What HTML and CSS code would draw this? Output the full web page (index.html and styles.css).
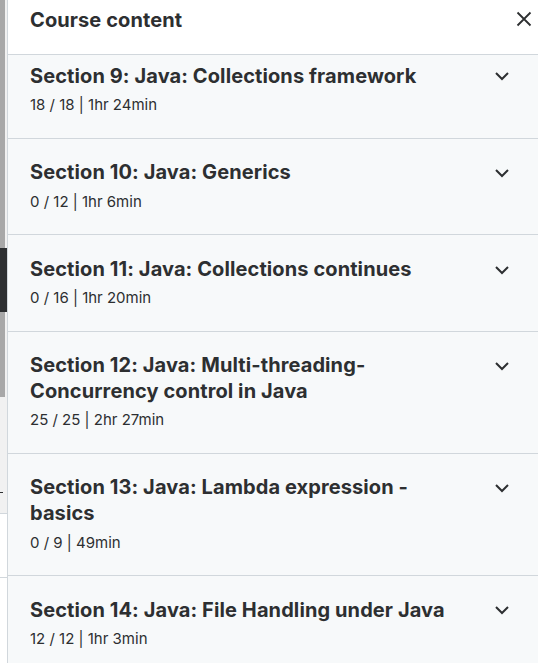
FILE: index.html
```html
<!DOCTYPE html>
<html lang="en">
<head>
<meta charset="utf-8">
<title>Course content</title>
<link rel="stylesheet" href="styles.css">
</head>
<body>
<div class="page">
  <div class="side">
    <div class="track">
      <div class="thumb t1"></div>
      <div class="dark"></div>
      <div class="thumb t2"></div>
      <div class="rest"><span class="dot"></span></div>
    </div>
    <div class="white w1"></div>
    <div class="white w2"></div>
  </div>
  <div class="panel">
    <div class="header">
      <h2 class="htitle">Course content</h2>
      <button class="close" aria-label="Close">
        <svg width="16" height="16" viewBox="0 0 16 16"><path d="M1.5 1.5 L14.5 14.5 M14.5 1.5 L1.5 14.5" stroke="#2d2f31" stroke-width="1.8" fill="none"/></svg>
      </button>
    </div>
    <div class="list">
      <div class="section first">
        <div class="info">
          <h3 class="stitle">Section 9: Java: Collections framework</h3>
          <div class="meta">18 / 18 | 1hr 24min</div>
        </div>
        <svg class="chev" width="14" height="26" viewBox="0 0 14 26"><path d="M1 10 L7 16 L13 10" stroke="#2d2f31" stroke-width="2" fill="none"/></svg>
      </div>
      <div class="section">
        <div class="info">
          <h3 class="stitle">Section 10: Java: Generics</h3>
          <div class="meta">0 / 12 | 1hr 6min</div>
        </div>
        <svg class="chev" width="14" height="26" viewBox="0 0 14 26"><path d="M1 10 L7 16 L13 10" stroke="#2d2f31" stroke-width="2" fill="none"/></svg>
      </div>
      <div class="section">
        <div class="info">
          <h3 class="stitle">Section 11: Java: Collections continues</h3>
          <div class="meta">0 / 16 | 1hr 20min</div>
        </div>
        <svg class="chev" width="14" height="26" viewBox="0 0 14 26"><path d="M1 10 L7 16 L13 10" stroke="#2d2f31" stroke-width="2" fill="none"/></svg>
      </div>
      <div class="section">
        <div class="info">
          <h3 class="stitle">Section 12: Java: Multi-threading-Concurrency control in Java</h3>
          <div class="meta">25 / 25 | 2hr 27min</div>
        </div>
        <svg class="chev" width="14" height="26" viewBox="0 0 14 26"><path d="M1 10 L7 16 L13 10" stroke="#2d2f31" stroke-width="2" fill="none"/></svg>
      </div>
      <div class="section">
        <div class="info">
          <h3 class="stitle">Section 13: Java: Lambda expression - basics</h3>
          <div class="meta">0 / 9 | 49min</div>
        </div>
        <svg class="chev" width="14" height="26" viewBox="0 0 14 26"><path d="M1 10 L7 16 L13 10" stroke="#2d2f31" stroke-width="2" fill="none"/></svg>
      </div>
      <div class="section">
        <div class="info">
          <h3 class="stitle">Section 14: Java: File Handling under Java</h3>
          <div class="meta">12 / 12 | 1hr 3min</div>
        </div>
        <svg class="chev" width="14" height="26" viewBox="0 0 14 26"><path d="M1 10 L7 16 L13 10" stroke="#2d2f31" stroke-width="2" fill="none"/></svg>
      </div>
    </div>
  </div>
</div>
</body>
</html>
```
FILE: styles.css
```css
html, body {
  margin: 0;
  padding: 0;
  height: 100%;
  overflow: hidden;
}
body {
  font-family: Inter, Roboto, "Liberation Sans", sans-serif;
  color: #2d2f31;
  background: #ffffff;
}
.page {
  display: flex;
  height: 663px;
}
.side {
  width: 7px;
  flex: none;
  display: flex;
  flex-direction: column;
  border-right: 1px solid #d1d7dc;
}
.track {
  height: 513px;
  background: #f1f1f1;
  display: flex;
  flex-direction: column;
}
.thumb {
  width: 5px;
  background: #a8a8a8;
}
.t1 { height: 248px; }
.t2 { height: 85px; }
.dark {
  height: 64px;
  background: #2d2f31;
}
.rest {
  flex: 1;
  display: flex;
  flex-direction: column;
  justify-content: flex-end;
  padding-bottom: 20px;
}
.dot {
  width: 3px;
  height: 1px;
  background: #2d2f31;
}
.white {
  background: #fff;
  border-top: 1px solid #d1d7dc;
}
.w1 { height: 63px; }
.w2 { flex: 1; }
.panel {
  flex: 1;
  display: flex;
  flex-direction: column;
  background: #f7f9fa;
  overflow: hidden;
}
.header {
  position: relative;
  z-index: 2;
  background: #fff;
  height: 55px;
  box-sizing: border-box;
  border-bottom: 1px solid #d1d7dc;
  display: flex;
  align-items: flex-start;
  justify-content: space-between;
  padding: 6px 6px 0 22px;
  flex: none;
}
.htitle {
  margin: 0;
  font-size: 20px;
  font-weight: 700;
  line-height: 28px;
  letter-spacing: 0.1px;
}
.close {
  border: 0;
  background: none;
  padding: 0;
  margin: 5px 0 0 0;
  width: 16px;
  height: 16px;
  display: flex;
}
.list {
  margin-top: -13px;
}
.section {
  display: flex;
  align-items: flex-start;
  padding: 21.5px 29px 22.5px 22px;
  border-bottom: 1px solid #d1d7dc;
}
.info {
  flex: 1;
  min-width: 0;
  padding-right: 20px;
}
.stitle {
  margin: 0;
  font-size: 20px;
  font-weight: 700;
  line-height: 25.6px;
  letter-spacing: 0.1px;
}
.meta {
  margin-top: 6px;
  font-size: 15px;
  line-height: 20px;
}
.chev {
  flex: none;
  margin-left: 16px;
  margin-top: -0.2px;
}
```
